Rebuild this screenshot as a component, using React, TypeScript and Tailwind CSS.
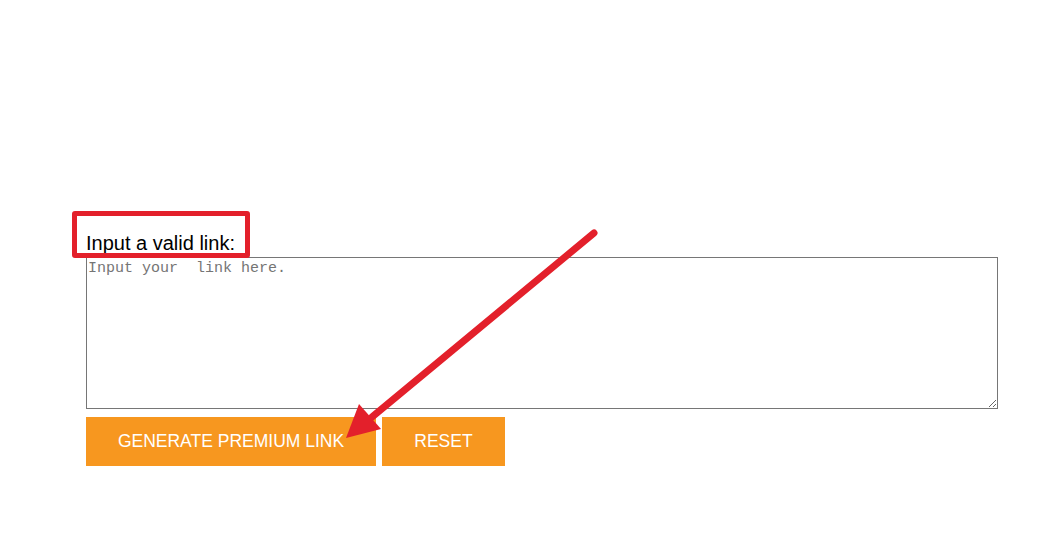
import { useState } from "react";

// red callout marks drawn on top of the form
function Annotations() {
  return (
    <>
      <div className="pointer-events-none absolute left-[72px] top-[211px] h-[47px] w-[178px] rounded-[3px] border-[5px] border-[#e3202b]" />
      <svg
        className="pointer-events-none absolute left-0 top-0"
        width={1062}
        height={553}
        viewBox="0 0 1062 553"
      >
        <line x1={594} y1={233} x2={372} y2={417} stroke="#e3202b" strokeWidth={7} strokeLinecap="round" />
        <polygon points="346,438 359,404 381,429" fill="#e3202b" />
      </svg>
    </>
  );
}

export default function App() {
  const [link, setLink] = useState("");

  return (
    <div className="relative h-[553px] w-[1062px] overflow-hidden bg-white font-['Liberation_Sans',Arial,sans-serif]">
      <div className="flex flex-col px-[86px] pt-[231px]">
        <label htmlFor="link" className="mb-[2px] text-[20px] leading-[24px] text-black">
          Input a valid link:
        </label>
        <textarea
          id="link"
          value={link}
          onChange={(e) => setLink(e.target.value)}
          placeholder="Input your  link here."
          className="h-[152px] w-[912px] border border-[#767676] px-[1px] py-[2px] font-['Liberation_Mono',monospace] text-[15px] leading-[18px] text-black placeholder:text-[#757575]"
        />
        <div className="mt-2 flex gap-[6px]">
          <button className="h-[49px] w-[290px] bg-[#f7971f] text-[17.5px] text-white uppercase">
            Generate Premium Link
          </button>
          <button className="h-[49px] w-[123px] bg-[#f7971f] text-[17.5px] text-white uppercase" onClick={() => setLink("")}>
            Reset
          </button>
        </div>
      </div>
      <Annotations />
    </div>
  );
}
